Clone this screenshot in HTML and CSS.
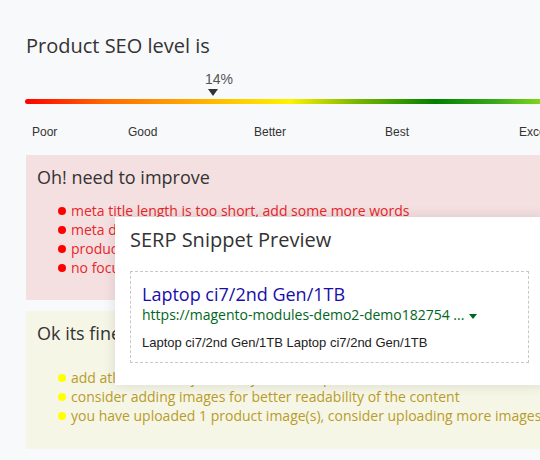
FILE: index.html
```html
<!DOCTYPE html>
<html lang="en">
<head>
    <meta charset="UTF-8">
    <meta name="viewport" content="width=device-width, initial-scale=1.0">
    <title>Product SEO</title>
    <link rel="stylesheet" href="styles.css">
</head>
<body>

<div class="page">
    <h1 class="seo-title">Product SEO level is</h1>

    <div class="meter">
        <div class="meter-value" style="left: 180px;">14%</div>
        <div class="meter-arrow" style="left: 183px;"></div>
        <div class="meter-bar"></div>
    </div>

    <div class="meter-labels">
        <span class="lbl-poor">Poor</span>
        <span class="lbl-good">Good</span>
        <span class="lbl-better">Better</span>
        <span class="lbl-best">Best</span>
        <span>Excellent</span>
    </div>

    <div class="box box-bad">
        <h3>Oh! need to improve</h3>
        <ul class="tips">
            <li>meta title length is too short, add some more words</li>
            <li>meta description length is too short, add some more words</li>
            <li>product description is too short, add some more words</li>
            <li>no focus keyword found in the product name</li>
        </ul>
    </div>

    <div class="box box-ok">
        <h3>Ok its fine</h3>
        <ul class="tips">
            <li>add atleast one keyword in your description</li>
            <li>consider adding images for better readability of the content</li>
            <li>you have uploaded 1 product image(s), consider uploading more images</li>
        </ul>
    </div>
</div>

<div class="serp">
    <h2>SERP Snippet Preview</h2>
    <div class="snippet">
        <div class="snippet-title">Laptop ci7/2nd Gen/1TB</div>
        <div class="snippet-url">https://magento-modules-demo2-demo182754 ... <span class="url-arrow"></span></div>
        <div class="snippet-desc">Laptop ci7/2nd Gen/1TB Laptop ci7/2nd Gen/1TB</div>
    </div>
</div>

</body>
</html>
```

FILE: styles.css
```css
* {
    margin: 0;
    padding: 0;
    box-sizing: border-box;
}

html, body {
    overflow: hidden;
}

body {
    background: #f8f9fb;
    font-family: "Open Sans", sans-serif;
    color: #333;
    width: 540px;
    height: 460px;
    position: relative;
}

.page {
    width: 720px;
    padding: 32px 0 0 26px;
}

.seo-title {
    font-size: 20px;
    font-weight: normal;
    line-height: 28px;
}

.meter {
    position: relative;
    height: 52px;
    margin-left: -1px;
}

.meter-value {
    position: absolute;
    top: 11px;
    font-family: "Liberation Sans", Arial, sans-serif;
    font-size: 14px;
    color: #555;
}

.meter-arrow {
    position: absolute;
    top: 29px;
    width: 0;
    height: 0;
    border-left: 5px solid transparent;
    border-right: 5px solid transparent;
    border-top: 7px solid #333;
}

.meter-bar {
    position: absolute;
    top: 39px;
    left: 0;
    width: 690px;
    height: 5px;
    border-radius: 3px 0 0 3px;
    background: linear-gradient(to right, #ff0000 0, #ff6a00 80px, #ffd500 225px, #fff200 265px, #7cb800 330px, #008000 410px, #3aa81a 470px, #7ed61c 515px, #9be82a 690px);
}

.meter-labels {
    display: flex;
    margin-top: 13px;
    font-family: "Liberation Sans", Arial, sans-serif;
    font-size: 12px;
    color: #333;
    padding-left: 6px;
    line-height: 14px;
}

.lbl-poor { width: 96px; }
.lbl-good { width: 126px; }
.lbl-better { width: 131px; }
.lbl-best { width: 134px; }

.box {
    padding: 10px 11px 22px;
}

.box h3 {
    font-size: 18px;
    font-weight: normal;
    line-height: 24px;
    color: #333;
}

.box-bad {
    background: #f4e0e1;
    margin-top: 16px;
    height: 145px;
}

.box-ok {
    background: #f6f6e7;
    margin-top: 11px;
    height: 138px;
}

.tips {
    list-style: none;
    padding-left: 21px;
    margin-top: 12px;
    font-size: 14px;
    line-height: 19px;
}

.box-ok .tips {
    margin-top: 23px;
}

.tips li {
    display: flex;
    align-items: center;
    white-space: nowrap;
}

.tips li::before {
    content: "";
    width: 8px;
    height: 8px;
    border-radius: 50%;
    margin-right: 5px;
    flex-shrink: 0;
}

.box-bad .tips li {
    color: #e8262b;
}

.box-bad .tips li::before {
    background: #ff0000;
}

.box-ok .tips li {
    color: #b89c2a;
}

.box-ok .tips li::before {
    background: #ffff00;
}

.serp {
    position: absolute;
    left: 115px;
    top: 217px;
    width: 429px;
    height: 168px;
    background: #fff;
    box-shadow: 0 0 12px rgba(0, 0, 0, 0.12);
    padding: 10px 15px 0;
}

.serp h2 {
    font-size: 20px;
    font-weight: normal;
    line-height: 26px;
    color: #333;
}

.snippet {
    margin-top: 18px;
    border: 1px dashed #c8c8c8;
    height: 92px;
    padding: 11px 11px 0;
}

.snippet-title {
    font-size: 18px;
    line-height: 23px;
    color: #1a0dab;
}

.snippet-url {
    font-size: 14px;
    line-height: 17px;
    color: #006621;
}

.url-arrow {
    display: inline-block;
    width: 0;
    height: 0;
    border-left: 4px solid transparent;
    border-right: 4px solid transparent;
    border-top: 5px solid #006621;
    vertical-align: middle;
    margin-left: 1px;
}

.snippet-desc {
    margin-top: 12px;
    font-family: "Liberation Sans", Arial, sans-serif;
    font-size: 13px;
    line-height: 16px;
    color: #222;
}
```
